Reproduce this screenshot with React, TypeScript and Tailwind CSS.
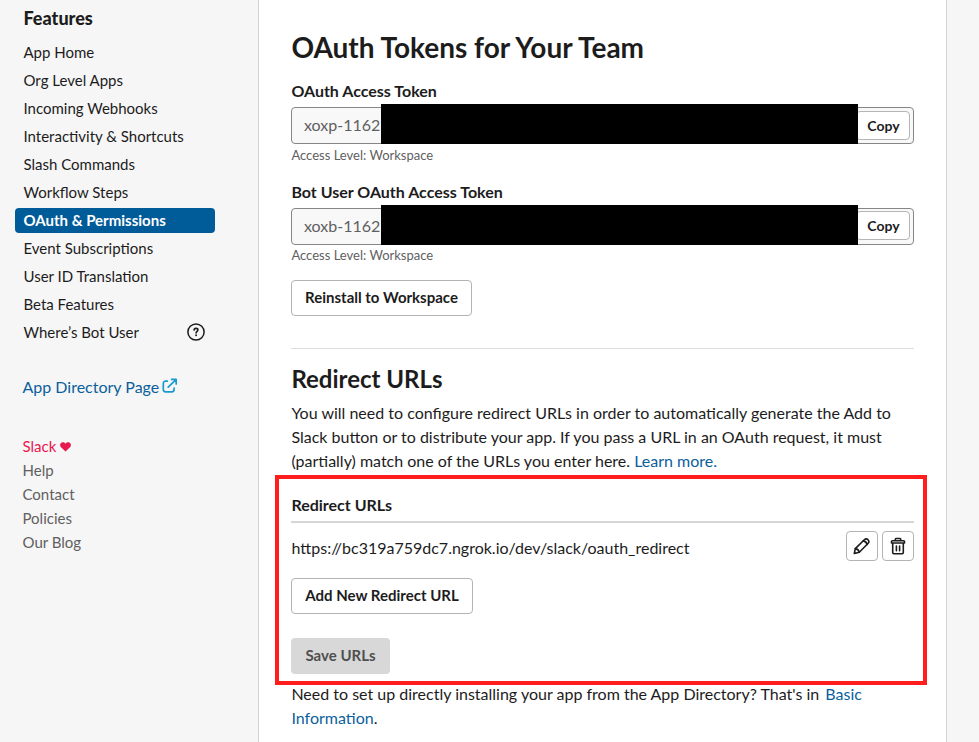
import React from "react";

const features = [
  "App Home",
  "Org Level Apps",
  "Incoming Webhooks",
  "Interactivity & Shortcuts",
  "Slash Commands",
  "Workflow Steps",
  "OAuth & Permissions",
  "Event Subscriptions",
  "User ID Translation",
  "Beta Features",
  "Where’s Bot User",
];

function HelpIcon() {
  return (
    <svg className="size-[18px]" viewBox="0 0 18 18" fill="none" stroke="#1d1c1d" strokeWidth="1.5" strokeLinecap="round" strokeLinejoin="round">
      <circle cx="9" cy="9" r="8.1" />
      <path d="M7.1 7.1C7.1 6 7.9 5.4 9 5.4s1.9.6 1.9 1.6C10.9 8.3 9.1 8.4 9.1 9.9" strokeWidth="1.6" />
      <circle cx="9.1" cy="12.3" r="0.4" fill="#1d1c1d" strokeWidth="1.1" />
    </svg>
  );
}

function ExternalIcon() {
  return (
    <svg className="size-4" viewBox="0 0 16 16" fill="none" stroke="#1a9bd0" strokeWidth="1.7" strokeLinecap="round" strokeLinejoin="round">
      <path d="M5.3 3.2H3.6a2.3 2.3 0 0 0-2.3 2.3v6a2.3 2.3 0 0 0 2.3 2.3h6.2a2.3 2.3 0 0 0 2.3-2.3V10" />
      <path d="M6.2 9.2 14 1.6M9.6 1.4h4.6V6" />
    </svg>
  );
}

function HeartIcon() {
  return (
    <svg className="h-[10px] w-[11px]" viewBox="0 0 11 10" fill="#e8184f">
      <path d="M5.5 9.6 1 5.3C-.2 4-.2 2 .9 1 2-.1 4.3-.1 5.5 1.7 6.7-.1 9-.1 10.1 1c1.1 1 1.1 3-.1 4.3z" />
    </svg>
  );
}

function PencilIcon() {
  return (
    <svg className="size-[18px]" viewBox="0 0 18 18" fill="none" stroke="#1d1c1d" strokeWidth="1.6" strokeLinecap="round" strokeLinejoin="round">
      <path d="M1.3 16.5 2.3 11.6 11.3 2.8Q13.2 1.1 15 2.7 16.7 4.5 15.2 6.3L6.3 15.3z" />
      <path d="M2.3 11.6Q5.6 12.1 6.3 15.3M10.2 3.9Q13.4 4.4 14.1 7.5" />
    </svg>
  );
}

function TrashIcon() {
  return (
    <svg className="size-[18px]" viewBox="0 0 18 18" fill="none" stroke="#1d1c1d" strokeWidth="1.6" strokeLinecap="round" strokeLinejoin="round">
      <path d="M2.5 6V4.5q0-.7.8-.7h11.4q.8 0 .8.7V6zM6.3 3.7V2.2q0-.7.7-.7h4q.7 0 .7.7v1.5M3.7 6v9.5q0 1.2 1.2 1.2h8.2q1.2 0 1.2-1.2V6M7.4 9v4.7M10.6 9v4.7" />
    </svg>
  );
}

function TokenField({ value, copyOffset }: { value: string; copyOffset: string }) {
  return (
    <div className="relative flex h-[37px] items-start justify-between rounded-[4px] border border-[#868686] bg-[#f8f8f8] pr-[3px] pl-3">
      <span className="pt-[5px] text-base leading-6 text-[#616061]">{value}</span>
      <button className={`h-[29px] w-[54px] rounded-[4px] border border-[#b5b5b5] bg-white pl-px text-sm font-bold ${copyOffset}`}>Copy</button>
      <div className="absolute -top-1 left-[89px] h-10 w-[477px] bg-black" />
    </div>
  );
}

const outlineButton = "h-9 rounded-[4px] border border-[#b3b3b3] bg-white pb-0.5 text-[15px] font-bold";

export default function App() {
  return (
    <div className="flex h-[742px] w-[979px] overflow-hidden bg-[#f6f6f6] font-['Lato',sans-serif] text-base leading-6 text-[#1d1c1d]">
      <aside className="w-[258px] shrink-0 pt-[5px]">
        <h3 className="pl-[23.5px] text-[18px] leading-[26px] font-black">Features</h3>
        <nav className="mt-2 ml-[15px] w-[200px] text-[15px]">
          {features.map((name) => (
            <div key={name} className="flex h-7 items-center justify-between">
              {name === "OAuth & Permissions" ? (
                <span className="mb-px flex h-[25px] w-full items-center rounded-[4px] bg-[#005b99] pb-px pl-[8.5px] font-bold text-white">{name}</span>
              ) : (
                <span className="pb-[3px] pl-[8.5px]">{name}</span>
              )}
              {name.startsWith("Where") && <span className="mr-[10px] mb-1 pt-px"><HelpIcon /></span>}
            </div>
          ))}
        </nav>
        <a className="mt-7 flex h-6 items-center gap-[3px] pl-[22.5px] text-[#0b5f9c]">
          App Directory Page <span className="mb-0.5"><ExternalIcon /></span>
        </a>
        <div className="mt-[35px] pl-[22.5px] text-[15px] text-[#616061]">
          <div className="flex items-center gap-1 text-[#e8184f]">Slack <span className="pt-0.5"><HeartIcon /></span></div>
          <div>Help</div>
          <div>Contact</div>
          <div>Policies</div>
          <div>Our Blog</div>
        </div>
      </aside>

      <main className="w-[689px] shrink-0 border-x border-[#d4d4d4] bg-white px-8 pt-[31px]">
        <h1 className="pl-[0.4px] text-[28px] leading-8 font-bold">OAuth Tokens for Your Team</h1>
        <div className="mt-4 h-7 pl-[0.4px] font-bold">OAuth Access Token</div>
        <TokenField value="xoxp-1162" copyOffset="mt-[3px]" />
        <div className="mt-px h-[21px] pl-[0.4px] text-[13px] leading-5 text-[#616061]">Access Level: Workspace</div>
        <div className="mt-[14px] h-7 pl-[0.4px] font-bold">Bot User OAuth Access Token</div>
        <TokenField value="xoxb-1162" copyOffset="mt-0.5" />
        <div className="h-5 pl-[0.4px] text-[13px] leading-5 text-[#616061]">Access Level: Workspace</div>
        <button className={`mt-[15px] block w-[181px] ${outlineButton}`}>Reinstall to Workspace</button>
        <hr className="mt-8 border-[#dddddd]" />
        <h2 className="mt-[14px] pl-[0.4px] text-2xl leading-8 font-bold">Redirect URLs</h2>
        <p className="mt-[6px] pl-[0.4px] whitespace-nowrap">
          You will need to configure redirect URLs in order to automatically generate the Add to<br />
          Slack button or to distribute your app. If you pass a URL in an OAuth request, it must<br />
          (partially) match one of the URLs you enter here. <a className="text-[#0b5f9c]">Learn more.</a>
        </p>
        <section className="-mx-4 mt-0.5 -mr-[13px] h-[210px] border-4 border-[#ff1d1d] pt-[14px] pr-[9px] pl-3">
          <div className="h-[30px] border-b-2 border-[#d6d6d6] pl-[0.4px] font-bold">Redirect URLs</div>
          <div className="mt-2 flex h-[30px] items-center gap-1">
            <span className="grow pt-[3px] pl-[0.5px]">https://bc319a759dc7.ngrok.io/dev/slack/oauth_redirect</span>
            <button className="flex h-[30px] w-8 items-center justify-center rounded-[4px] border border-[#b3b3b3]"><PencilIcon /></button>
            <button className="flex h-[30px] w-8 items-center justify-center rounded-[4px] border border-[#b3b3b3]"><TrashIcon /></button>
          </div>
          <button className={`mt-[17px] block w-[182px] ${outlineButton}`}>Add New Redirect URL</button>
          <button className="mt-6 block h-9 w-[99px] rounded-[4px] bg-[#d8d8d8] pb-0.5 text-[15px] font-bold text-[#4f4f4f]">Save URLs</button>
        </section>
        <p className="-mt-[3px] pl-[0.4px] whitespace-nowrap">
          Need to set up directly installing your app from the App Directory? That's in <a className="ml-[2px] text-[#0b5f9c]">Basic<br />Information</a>.
        </p>
      </main>
    </div>
  );
}
